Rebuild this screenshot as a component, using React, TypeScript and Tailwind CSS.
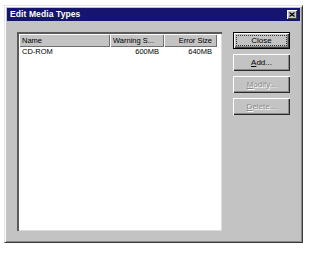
import React from "react";

const font = { fontFamily: '"Liberation Sans", Arial, sans-serif' };

type Btn = { label: string; hot: string; rest: string; def?: boolean; disabled?: boolean };

const buttons: Btn[] = [
	{ label: "Close", hot: "", rest: "Close", def: true },
	{ label: "Add...", hot: "A", rest: "dd...", disabled: false },
	{ label: "Modify...", hot: "M", rest: "odify...", disabled: true },
	{ label: "Delete...", hot: "D", rest: "elete...", disabled: true },
];

const DialogButton = ({ btn }: { btn: Btn }) => {
	const textCls = btn.disabled
		? "text-[#8a8a8a] [text-shadow:1px_1px_0_#ffffff]"
		: "text-black";
	return (
		<div
			className={`h-[17px] w-[57px] bg-[#c3c3c3] flex items-center justify-center ${
				btn.def
					? "border border-black shadow-[inset_1px_1px_#ffffff,inset_-1px_-1px_#404040,inset_-2px_-2px_#8a8a8a] p-[2px]"
					: "shadow-[inset_1px_1px_#ffffff,inset_-1px_-1px_#2a2a2a,inset_-2px_-2px_#8a8a8a]"
			}`}
		>
			<span
				className={`text-[8px] leading-none ${textCls} ${
					btn.def
						? "border border-dotted border-[#333] w-full h-full flex items-center justify-center"
						: ""
				}`}
			>
				{btn.hot && <span className="underline">{btn.hot}</span>}
				{btn.rest}
			</span>
		</div>
	);
};

const App = () => {
	return (
		<div className="w-[320px] h-[259px] bg-white pt-[5px] pl-[4px]" style={font}>
			<div className="w-[299px] h-[238px] bg-[#c3c3c3] border border-t-[#e4e4e4] border-l-[#e4e4e4] border-r-[#3a3a3a] border-b-[#3a3a3a] shadow-[inset_1px_1px_#ffffff,inset_-1px_-1px_#8a8a8a] p-[2px] flex flex-col">
				<div className="h-[13px] bg-[#15156f] flex items-center justify-between pl-[3px] pr-[3px]">
					<span className="text-white font-bold text-[8.5px] leading-none tracking-[0.1px]">
						Edit Media Types
					</span>
					<div className="w-[10px] h-[9px] bg-[#c3c3c3] shadow-[inset_1px_1px_#ffffff,inset_-1px_-1px_#404040] flex items-center justify-center">
						<svg width="6" height="5" viewBox="0 0 6 5">
							<path d="M0.5 0.5 L5.5 4.5 M5.5 0.5 L0.5 4.5" stroke="#000" strokeWidth="1.3" />
						</svg>
					</div>
				</div>

				<div className="flex pl-[10px] pt-[11px]">
					<div className="w-[205px] h-[199px] bg-white border-t-2 border-l-2 border-t-[#5a5a5a] border-l-[#5a5a5a] shadow-[inset_-1px_-1px_#dcdcdc] flex flex-col">
						<div className="flex h-[13px] text-[7.5px] text-black">
							<div className="w-[91px] bg-[#c3c3c3] shadow-[inset_1px_1px_#ffffff,inset_-1px_-1px_#6e6e6e] flex items-center pl-[3px]">
								Name
							</div>
							<div className="w-[54px] bg-[#c3c3c3] shadow-[inset_1px_1px_#ffffff,inset_-1px_-1px_#6e6e6e] flex items-center pl-[3px]">
								Warning S...
							</div>
							<div className="w-[53px] bg-[#c3c3c3] shadow-[inset_1px_1px_#ffffff,inset_-1px_-1px_#6e6e6e] flex items-center justify-end pr-[5px]">
								Error Size
							</div>
						</div>
						<div className="flex h-[10px] items-center text-[7.5px] text-black">
							<div className="w-[91px] pl-[3px]">CD-ROM</div>
							<div className="w-[54px] text-right pr-[5px]">600MB</div>
							<div className="w-[53px] text-right pr-[5px]">640MB</div>
						</div>
					</div>

					<div className="ml-[11px] flex flex-col gap-[5px]">
						{buttons.map((b) => (
							<DialogButton key={b.label} btn={b} />
						))}
					</div>
				</div>
			</div>
		</div>
	);
};

export default App;
